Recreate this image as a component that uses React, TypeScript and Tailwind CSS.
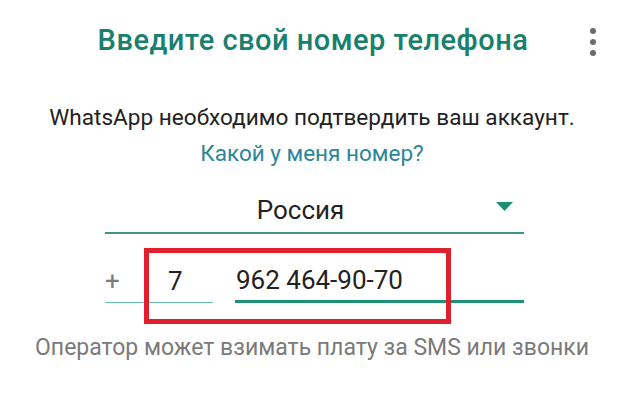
import React from "react";

export default function App() {
  return (
    <div
      className="relative w-[624px] h-[409px] bg-white overflow-hidden"
      style={{ fontFamily: "Roboto, 'Noto Sans', sans-serif" }}
    >
      {/* Header */}
      <div className="relative pt-[24px] flex justify-center">
        <h1 className="text-[29px] leading-[32px] font-medium tracking-[0.5px] text-[#18806c] pl-[2px]">
          Введите свой номер телефона
        </h1>
        <div className="absolute left-[590px] top-[28px] flex flex-col gap-[5px]">
          <span className="block w-[6px] h-[6px] rounded-full bg-[#6b6b6b]" />
          <span className="block w-[6px] h-[6px] rounded-full bg-[#6b6b6b]" />
          <span className="block w-[6px] h-[6px] rounded-full bg-[#6b6b6b]" />
        </div>
      </div>

      {/* Description */}
      <p className="mt-[48px] text-center text-[22.6px] leading-[28px] text-[#222]">
        WhatsApp необходимо подтвердить ваш аккаунт.
      </p>
      <p className="mt-[7px] text-center text-[22.5px] leading-[28px] text-[#2a8798]">
        Какой у меня номер?
      </p>

      {/* Country */}
      <div className="ml-[105px] mt-[22px] w-[419px] flex items-center border-b-2 border-[#3d9583] h-[45px] pb-[2px]">
        <span className="flex-1 text-center text-[26px] leading-[32px] text-[#222]">
          Россия
        </span>
        <svg width="17" height="9" viewBox="0 0 17 9" className="mr-[11px] mb-[6px]">
          <polygon points="0,0 17,0 8.5,9" fill="#1f8f74" />
        </svg>
      </div>

      {/* Phone */}
      <div className="ml-[105px] mt-[25px] w-[419px] flex items-end">
        <div className="w-[108px] h-[44px] flex items-center border-b-[1.5px] border-[#6cbcaa]">
          <span className="text-[26px] leading-[32px] text-[#7c7c7c] w-[63px]">+</span>
          <span className="text-[26px] leading-[32px] text-[#222]">7</span>
        </div>
        <div className="ml-[22px] flex-1 h-[44px] flex items-center border-b-[3px] border-[#1f8f76]">
          <span className="text-[26px] leading-[32px] text-[#222] pl-[1px]">962 464-90-70</span>
        </div>
      </div>

      {/* Hint */}
      <p className="mt-[31px] text-center text-[23px] leading-[28px] text-[#7a7a7a]">
        Оператор может взимать плату за SMS или звонки
      </p>

      {/* Red annotation box */}
      <div className="absolute left-[144px] top-[248px] w-[307px] h-[76px] border-[5px] border-[#e0202e]" />
    </div>
  );
}
